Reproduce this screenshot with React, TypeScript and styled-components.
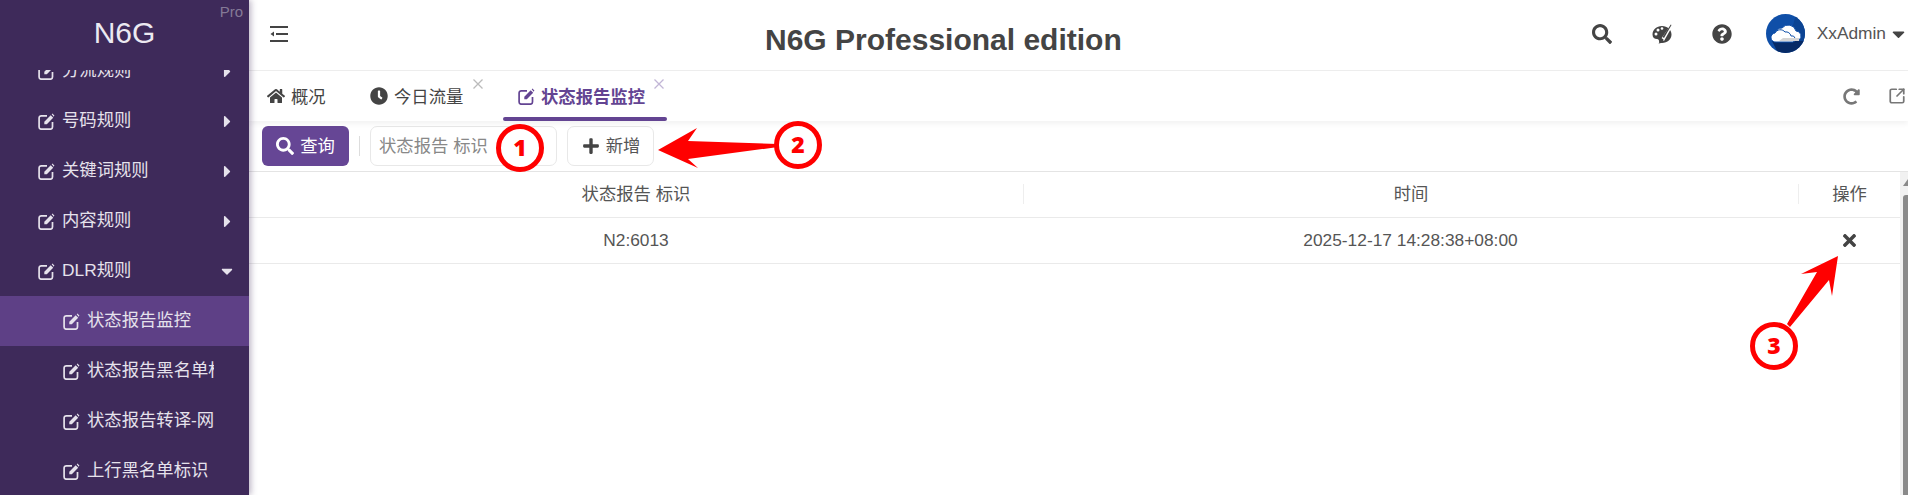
import React from 'react';
import styled, { createGlobalStyle } from 'styled-components';
import { FaHome, FaClock, FaSearch, FaPlus, FaTimes, FaQuestionCircle, FaCaretDown, FaCaretRight, FaRedoAlt } from 'react-icons/fa';
import { SquareArrowOutUpRight } from 'lucide-react';

const Global = createGlobalStyle`
  html, body { margin: 0; padding: 0; height: 495px; overflow: hidden; background: #fff; }
  body { font-family: "Liberation Sans", "Noto Sans CJK SC", sans-serif; font-size: 13pt; color: #444; }
  #root { height: 495px; }
`;

const Page = styled.div`
  position: relative;
  display: flex;
  width: 1908px;
  height: 495px;
  overflow: hidden;
`;

const Sidebar = styled.aside`
  flex: 0 0 249px;
  width: 249px;
  min-width: 0;
  display: flex;
  flex-direction: column;
  background: #3e2a5a;
  box-shadow: 2px 0 6px rgba(62, 42, 90, 0.35);
  z-index: 2;
`;

const Logo = styled.div`
  position: relative;
  height: 70px;
  flex: none;
  display: flex;
  align-items: center;
  justify-content: center;
  font-size: 30px;
  padding-bottom: 4px;
  box-sizing: border-box;
  color: #ece9f1;
  background: #3e2a5a;
  z-index: 1;
`;

const ProTag = styled.span`
  position: absolute;
  top: 3px;
  right: 6px;
  font-size: 15px;
  color: #857a97;
`;

const MenuClip = styled.nav`
  flex: 1;
  min-height: 0;
  overflow: hidden;
`;

const Menu = styled.ul`
  list-style: none;
  margin: -24px 0 0;
  padding: 0;
`;

const Item = styled.li<{ $sub?: boolean; $active?: boolean }>`
  height: 50px;
  display: flex;
  align-items: center;
  padding-left: ${(p) => (p.$sub ? 63 : 38)}px;
  padding-right: ${(p) => (p.$sub ? 35 : 12)}px;
  box-sizing: border-box;
  background: ${(p) => (p.$active ? '#5e4086' : 'transparent')};
  color: #e6e2ec;
  white-space: nowrap;
`;

const Label = styled.span`
  overflow: hidden;
  min-width: 0;
  margin-bottom: 5px;
`;

const Caret = styled.span`
  flex: none;
  width: 20px;
  margin-left: auto;
  display: flex;
  justify-content: center;
`;

const EditSvg = styled.svg<{ $gap: number }>`
  flex: none;
  width: 17px;
  height: 17px;
  margin-right: ${(p) => p.$gap}px;
`;

const EditIcon = ({ gap = 7 }: { gap?: number }) => (
  <EditSvg $gap={gap} viewBox="0 0 17 17">
    <path d="M9 2.800H3.300A2.200 2.200 0 0 0 1.100 5v9a2.200 2.200 0 0 0 2.200 2.200h9a2.200 2.200 0 0 0 2.200-2.200V9" fill="none" stroke="currentColor" strokeWidth="1.700" />
    <path d="M6.300 11.200V8.700L12.700 2.300l2.500 2.500L8.800 11.200zM13.700 1.300l.7-.7 2 2-.7 1.200z" fill="currentColor" />
  </EditSvg>
);

const Main = styled.main`
  position: relative;
  flex: 1;
  min-width: 0;
  display: flex;
  flex-direction: column;
`;

const Header = styled.header`
  position: relative;
  height: 71px;
  flex: none;
  display: flex;
  align-items: center;
  padding: 0 3px 3px 21px;
  box-sizing: border-box;
  border-bottom: 1px solid #eeeeee;
`;

const Title = styled.h1`
  margin: 13px 0 0 477px;
  font-size: 30px;
  line-height: 38px;
  font-weight: 700;
  color: #444;
  white-space: nowrap;
`;

const HeaderRight = styled.div`
  margin-left: auto;
  display: flex;
  align-items: center;
`;

const HeadIcon = styled.span`
  display: flex;
  width: 20px;
  font-size: 20px;
  margin-right: 40px;
  color: #444;
`;

const Avatar = styled.svg`
  width: 39px;
  height: 39px;
  margin-left: -6px;
  margin-right: 12px;
`;

const UserName = styled.span`
  color: #555;
  margin-right: 6px;
`;

const UserCaret = styled(FaCaretDown)`
  width: 13px;
  height: 20px;
  color: #444;
`;

const Tabs = styled.div`
  height: 50px;
  flex: none;
  display: flex;
  align-items: stretch;
  padding: 0 2px 0 18px;
  box-sizing: border-box;
  box-shadow: 0 3px 5px rgba(0, 0, 0, 0.05);
  z-index: 1;
`;

const Tab = styled.div<{ $active?: boolean; $w: number }>`
  position: relative;
  width: ${(p) => p.$w}px;
  display: flex;
  align-items: center;
  padding-left: ${(p) => (p.$active ? 15 : 0)}px;
  box-sizing: border-box;
  font-weight: ${(p) => (p.$active ? 700 : 400)};
  color: ${(p) => (p.$active ? '#634492' : '#444')};
  svg.tab-icon { margin-right: 6px; }
  &::after {
    content: '';
    display: ${(p) => (p.$active ? 'block' : 'none')};
    position: absolute;
    left: 0;
    right: 0;
    bottom: 0;
    height: 4px;
    border-radius: 2px;
    background: #634492;
  }
`;

const TabText = styled.span`
  margin-bottom: 2px;
`;

const TabClose = styled.svg<{ $active?: boolean }>`
  position: absolute;
  top: 8px;
  right: ${(p) => (p.$active ? 3 : 20)}px;
  width: 10px;
  height: 10px;
  stroke: ${(p) => (p.$active ? '#c2b6d6' : '#bbb')};
  stroke-width: 1.3;
`;

const CloseMark = ({ active }: { active?: boolean }) => (
  <TabClose $active={active} viewBox="0 0 10 10">
    <path d="M0.5 0.5L9.5 9.5M9.5 0.5L0.5 9.5" />
  </TabClose>
);

const TabActions = styled.div`
  margin-left: auto;
  display: flex;
  align-items: center;
  color: #777;
  font-size: 17px;
  gap: 28px;
`;

const Toolbar = styled.div`
  height: 51px;
  flex: none;
  display: flex;
  align-items: center;
  padding: 0 0 0 13px;
  box-sizing: border-box;
  border-bottom: 1px solid #e4e4e4;
`;

const SearchButton = styled.button`
  width: 87px;
  height: 40px;
  border: none;
  border-radius: 6px;
  background: #664695;
  color: #fff;
  font: inherit;
  display: flex;
  align-items: center;
  justify-content: center;
  gap: 6px;
  padding: 0;
`;

const ButtonText = styled.span`
  margin-bottom: 4px;
`;

const Divider = styled.span`
  width: 1px;
  height: 20px;
  background: #ddd;
  margin: 0 10px;
`;

const FieldBox = styled.div`
  width: 187px;
  height: 40px;
  border: 1px solid #e8e8e8;
  border-radius: 7px;
  box-sizing: border-box;
  padding: 0 0 4px 8px;
  display: flex;
  align-items: center;
  color: #888;
  margin-right: 10px;
`;

const AddButton = styled.button`
  width: 87px;
  height: 40px;
  border: 1px solid #e8e8e8;
  border-radius: 7px;
  background: #fff;
  color: #555;
  font: inherit;
  display: flex;
  align-items: center;
  justify-content: center;
  gap: 6px;
  padding: 0 0 0 1px;
  svg { color: #444; }
`;

const TableArea = styled.div`
  flex: 1;
  display: flex;
  min-height: 0;
`;

const Table = styled.div`
  flex: 1;
`;

const Row = styled.div`
  display: grid;
  grid-template-columns: 774px 775px 1fr;
  height: 46px;
  border-bottom: 1px solid #eaeaea;
  box-sizing: border-box;
  align-items: center;
`;

const Cell = styled.div<{ $divider?: boolean }>`
  text-align: center;
  color: #555;
  line-height: 20px;
  margin-bottom: 2px;
  border-left: ${(p) => (p.$divider ? '1px solid #eee' : 'none')};
`;

const ActionIcon = styled(FaTimes)`
  display: block;
  margin: 2px auto 0;
  font-size: 19px;
  color: #444;
`;

const Scrollbar = styled.div`
  flex: 0 0 8px;
  display: flex;
  flex-direction: column;
  align-items: flex-end;
  background: #f1f1f1;
`;

const ScrollUp = styled.div`
  width: 0;
  height: 0;
  margin: 7px 0 9px;
  border-left: 5px solid transparent;
  border-right: 0 solid transparent;
  border-bottom: 7px solid #8a8a8a;
`;

const ScrollThumb = styled.div`
  flex: 1;
  width: 5px;
  border-radius: 3px 0 0 0;
  background: #8a8a8a;
`;

const Annotations = styled.svg`
  position: absolute;
  left: 0;
  top: 0;
  width: 1908px;
  height: 495px;
  z-index: 5;
  pointer-events: none;
`;

const Badge = ({ cx, cy, n }: { cx: number; cy: number; n: number }) => (
  <g>
    <circle cx={cx} cy={cy} r={21.5} fill="#fff" stroke="#ff0000" strokeWidth={5} />
    <text x={cx} y={cy + 8} textAnchor="middle" fontFamily="'Open Sans', sans-serif" fontWeight={800} fontSize={23} fill="#ff0000">{n}</text>
  </g>
);

const rules = ['分流规则', '号码规则', '关键词规则', '内容规则'];
const dlrRules = ['状态报告监控', '状态报告黑名单标识', '状态报告转译-网关', '上行黑名单标识'];

export default function App() {
  return (
    <Page>
      <Global />
      <Sidebar>
        <Logo>N6G<ProTag>Pro</ProTag></Logo>
        <MenuClip>
          <Menu>
            {rules.map((r) => (
              <Item key={r}>
                <EditIcon />
                <Label>{r}</Label>
                <Caret><FaCaretRight size={19} /></Caret>
              </Item>
            ))}
            <Item>
              <EditIcon />
              <Label>DLR规则</Label>
              <Caret><FaCaretDown size={18} /></Caret>
            </Item>
            {dlrRules.map((r, i) => (
              <Item key={r} $sub $active={i === 0}>
                <EditIcon />
                <Label>{r}</Label>
              </Item>
            ))}
          </Menu>
        </MenuClip>
      </Sidebar>
      <Main>
        <Header>
          <svg width="18" height="16" viewBox="0 0 18 16" fill="none" stroke="#444" strokeWidth="1.8">
            <path d="M0 1h18M6 8h12M0 15h18" />
            <path d="M0.5 8L4 5.5v5z" fill="#444" stroke="none" />
          </svg>
          <Title>N6G Professional edition</Title>
          <HeaderRight>
            <HeadIcon><FaSearch /></HeadIcon>
            <HeadIcon>
              <svg width="20" height="20" viewBox="0 0 20 20">
                <path d="M10 2C4.500 2 .5 6 .5 10.500c0 3 2 4.500 4.500 4.500 1.500 0 2 1 2 2s1 2 3 2c5.500 0 9.500-4 9.500-8.500S15.500 2 10 2z" fill="#444" />
                <circle cx="4" cy="10" r="1.500" fill="#fff" />
                <circle cx="6" cy="6" r="1.500" fill="#fff" />
                <circle cx="10" cy="4.500" r="1.300" fill="#fff" />
                <path d="M19.500 0L9 15l3 2L21 1z" fill="#fff" />
                <path d="M18.800 0.500L10.500 13l1.500 1 7.500-13z" fill="#444" />
                <path d="M9.500 14l2 1.500c-.5 2.500-2.500 4-5 4 1-1 1-2 1-3s.5-2 2-2.500z" fill="#444" />
              </svg>
            </HeadIcon>
            <HeadIcon><FaQuestionCircle /></HeadIcon>
            <Avatar viewBox="0 0 39 39">
              <defs>
                <clipPath id="av"><circle cx="19.500" cy="19.500" r="19.500" /></clipPath>
              </defs>
              <g clipPath="url(#av)">
                <rect width="39" height="39" fill="#0f4fa8" />
                <path d="M30 0L39 6V30H22z" fill="#0c4493" />
                <path d="M6 27h33v12H12z" fill="#062a66" />
                <path d="M15 26a5 5 0 0 1 1-12 8 8 0 0 1 14 3 5 5 0 0 1 3 9z" fill="#fff" stroke="#0f4fa8" strokeWidth="1" />
                <path d="M10 28a4.500 4.500 0 0 1-1-9 6 6 0 0 1 10-1 5 5 0 0 1 6 4 3 3 0 0 1 2 6z" fill="#fff" stroke="#0f4fa8" strokeWidth="1" />
                <path d="M17 24h16v3H13z" fill="#d4d4d4" />
              </g>
            </Avatar>
            <UserName>XxAdmin</UserName>
            <UserCaret />
          </HeaderRight>
        </Header>
        <Tabs>
          <Tab $w={103}><FaHome size={18} className="tab-icon" /><TabText>概况</TabText></Tab>
          <Tab $w={133}>
            <FaClock size={18} className="tab-icon" /><TabText>今日流量</TabText>
            <CloseMark />
          </Tab>
          <Tab $active $w={164}>
            <EditIcon gap={6} /><TabText>状态报告监控</TabText>
            <CloseMark active />
          </Tab>
          <TabActions>
            <FaRedoAlt />
            <SquareArrowOutUpRight size={18} strokeWidth={2.3} />
          </TabActions>
        </Tabs>
        <Toolbar>
          <SearchButton><FaSearch size={18} /><ButtonText>查询</ButtonText></SearchButton>
          <Divider />
          <FieldBox>状态报告 标识</FieldBox>
          <AddButton><FaPlus size={18} /><ButtonText>新增</ButtonText></AddButton>
        </Toolbar>
        <TableArea>
          <Table>
            <Row>
              <Cell>状态报告 标识</Cell>
              <Cell $divider>时间</Cell>
              <Cell $divider>操作</Cell>
            </Row>
            <Row>
              <Cell>N2:6013</Cell>
              <Cell>2025-12-17 14:28:38+08:00</Cell>
              <Cell><ActionIcon /></Cell>
            </Row>
          </Table>
          <Scrollbar>
            <ScrollUp />
            <ScrollThumb />
          </Scrollbar>
        </TableArea>
      </Main>
      <Annotations viewBox="0 0 1908 495">
        <path d="M658 150L697 128L688 141L778 144L778 147L688 159L698 168z" fill="#ff0000" />
        <path d="M1838 256L1832 296L1829 280L1790 327L1787 324L1817 272L1801 274z" fill="#ff0000" />
        <Badge cx={520} cy={148} n={1} />
        <Badge cx={798} cy={145} n={2} />
        <Badge cx={1774} cy={346} n={3} />
      </Annotations>
    </Page>
  );
}
